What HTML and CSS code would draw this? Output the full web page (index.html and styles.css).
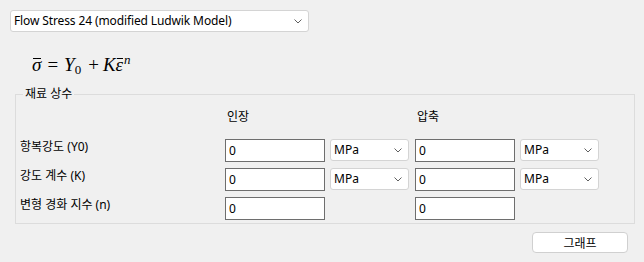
FILE: index.html
```html
<!DOCTYPE html>
<html lang="ko">
<head>
    <meta charset="UTF-8">
    <title>Flow Stress</title>
    <link rel="stylesheet" href="styles.css">
</head>
<body>
    <div class="page">
        <div class="combo model-select">
            <span>Flow Stress 24 (modified Ludwik Model)</span>
            <svg class="chevron" width="8" height="5" viewBox="0 0 8 5"><path d="M0.5 0.5 L4 4 L7.5 0.5" fill="none" stroke="#606060" stroke-width="1"/></svg>
        </div>

        <!-- Model equation -->
        <div class="formula">
            <span class="bar">σ</span><span class="op eq">=</span>Y<sub>0</sub><span class="op plus">+</span>K<span class="bar">ε</span><sup>n</sup>
        </div>

        <fieldset class="group">
            <legend>재료 상수</legend>
            <div class="params">
                <div></div>
                <div class="col-head">인장</div>
                <div></div>
                <div class="col-head">압축</div>
                <div></div>

                <div class="label">항복강도 (Y0)</div>
                <input class="value" type="text" value="0">
                <div class="combo unit"><span>MPa</span><svg class="chevron" width="8" height="5" viewBox="0 0 8 5"><path d="M0.5 0.5 L4 4 L7.5 0.5" fill="none" stroke="#606060" stroke-width="1"/></svg></div>
                <input class="value" type="text" value="0">
                <div class="combo unit"><span>MPa</span><svg class="chevron" width="8" height="5" viewBox="0 0 8 5"><path d="M0.5 0.5 L4 4 L7.5 0.5" fill="none" stroke="#606060" stroke-width="1"/></svg></div>

                <div class="label">강도 계수 (K)</div>
                <input class="value" type="text" value="0">
                <div class="combo unit"><span>MPa</span><svg class="chevron" width="8" height="5" viewBox="0 0 8 5"><path d="M0.5 0.5 L4 4 L7.5 0.5" fill="none" stroke="#606060" stroke-width="1"/></svg></div>
                <input class="value" type="text" value="0">
                <div class="combo unit"><span>MPa</span><svg class="chevron" width="8" height="5" viewBox="0 0 8 5"><path d="M0.5 0.5 L4 4 L7.5 0.5" fill="none" stroke="#606060" stroke-width="1"/></svg></div>

                <div class="label">변형 경화 지수 (n)</div>
                <input class="value" type="text" value="0">
                <div></div>
                <input class="value" type="text" value="0">
                <div></div>
            </div>
        </fieldset>

        <div class="actions">
            <button class="graph-btn">그래프</button>
        </div>
    </div>
</body>
</html>
```

FILE: styles.css
```css
* {
    box-sizing: border-box;
}
body {
    margin: 0;
    background: #f0f0f0;
    font-family: "Noto Sans", "Noto Sans CJK KR", sans-serif;
    font-size: 12px;
    color: #000;
}
.page {
    padding: 10px;
}
.combo {
    display: flex;
    align-items: center;
    justify-content: space-between;
    background: white;
    border: 1px solid #d4d4d4;
    border-radius: 3px;
    padding: 0 6px 0 3px;
    line-height: 16px;
}
.model-select {
    width: 299px;
    height: 22px;
    letter-spacing: -0.12px;
}
.chevron {
    display: block;
}
.formula {
    margin: 16px 0 0 22px;
    height: 39px;
    font-family: "Liberation Serif", serif;
    font-style: italic;
    font-size: 19px;
    line-height: 24px;
}
.formula .op {
    font-style: normal;
}
.formula .eq {
    margin: 0 6px;
}
.formula .plus {
    margin: 0 4px 0 7px;
}
.formula .bar {
    position: relative;
}
.formula .bar::before {
    content: "";
    position: absolute;
    left: 1px;
    right: 0;
    top: 4px;
    border-top: 1px solid #000;
}
.formula sub {
    font-style: normal;
    font-size: 13px;
    vertical-align: -3px;
}
.formula sup {
    font-size: 13px;
    vertical-align: 7px;
    margin-left: 1px;
}
.group {
    margin: 0 0 0 5px;
    width: 620px;
    border: 1px solid #dcdcdc;
    padding: 0 4px 3px 4px;
}
.group legend {
    padding: 0 2px;
    margin-left: 3px;
    line-height: 14px;
}
.params {
    display: grid;
    grid-template-columns: 205px 105px 85px 105px 79px;
    row-gap: 6px;
    margin-top: 8px;
}
.col-head {
    line-height: 16px;
    padding: 0 0 8px 2px;
}
.label {
    line-height: 16px;
}
.value {
    width: 100px;
    height: 23px;
    border: 1px solid #6e6e6e;
    background: white;
    font: inherit;
    padding: 0 3px;
    margin: 0;
}
.unit {
    width: 79px;
    height: 22px;
}
.actions {
    display: flex;
    justify-content: flex-end;
    padding: 8px 6px 0 0;
}
.graph-btn {
    width: 96px;
    height: 21px;
    background: white;
    border: 1px solid #d0d0d0;
    border-radius: 4px;
    font: inherit;
    padding: 0;
}
```
